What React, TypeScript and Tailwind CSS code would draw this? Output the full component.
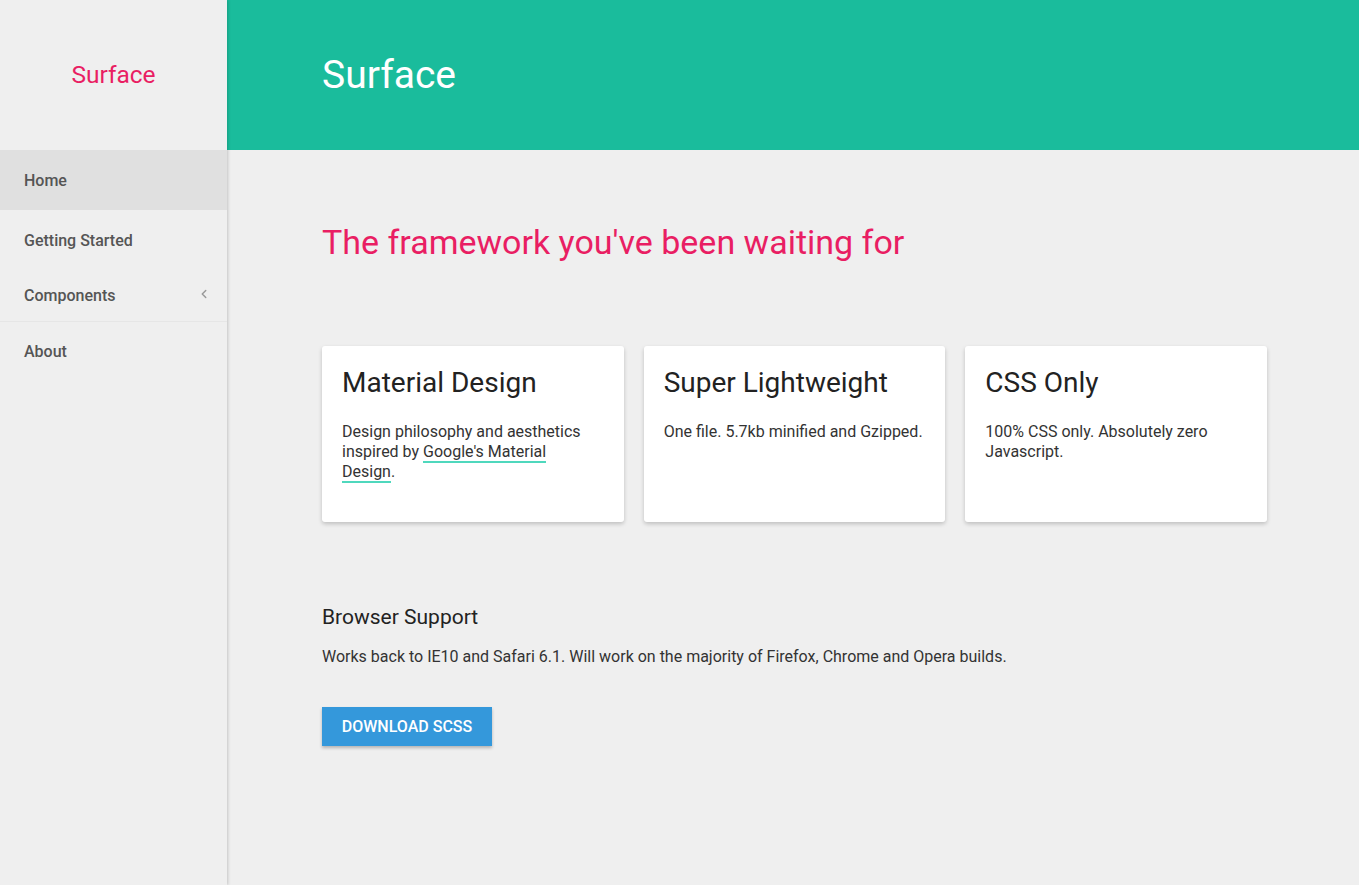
import React from 'react';
import { ChevronLeft } from 'lucide-react';

const navItems = [
  { label: 'Home', active: true, h: 'h-[60px]' },
  { label: 'Getting Started', h: 'h-[60px]' },
  { label: 'Components', chevron: true, h: 'h-[52px] border-b border-[#e6e6e6]' },
  { label: 'About', h: 'h-[58px]' },
];

const cards = [
  {
    title: 'Material Design',
    bodyClass: 'max-w-[250px]',
    body: (
      <>
        Design philosophy and aesthetics inspired by{' '}
        <a className="border-b-2 border-[#4fd8bd] text-[#333]">Google's Material Design</a>.
      </>
    ),
  },
  { title: 'Super Lightweight', bodyClass: '', body: 'One file. 5.7kb minified and Gzipped.' },
  { title: 'CSS Only', bodyClass: '', body: '100% CSS only. Absolutely zero Javascript.' },
];

export default function App() {
  return (
    <div className="flex min-h-[885px] bg-[#efefef] font-['Roboto',sans-serif]">
      <aside className="relative z-10 w-[227px] shrink-0 bg-[#efefef] shadow-[1px_0_3px_rgba(0,0,0,0.18)]">
        <div className="flex h-[150px] items-center justify-center pt-px text-[24.5px] text-[#e91e63]">Surface</div>
        <nav>
          {navItems.map((item) => (
            <div
              key={item.label}
              className={`flex items-center justify-between pl-6 pr-4 pt-px text-[16px] font-medium text-[#555] ${item.h} ${item.active ? 'bg-[#e0e0e0]' : ''}`}
            >
              <span>{item.label}</span>
              {item.chevron && <ChevronLeft size={14} strokeWidth={2.5} className="mb-1 text-[#999]" />}
            </div>
          ))}
        </nav>
      </aside>

      <main className="flex-1">
        <header className="flex h-[150px] items-center bg-[#1abc9c] pl-[95px] pt-px text-[39px] text-white">Surface</header>

        <div className="w-[1040px] pl-[95px]">
          <h1 className="mt-[72px] text-[34px] leading-[40px] text-[#e91e63]">The framework you've been waiting for</h1>

          <div className="mt-[84px] grid grid-cols-3 gap-5">
            {cards.map((c) => (
              <div key={c.title} className="h-[176px] rounded-[3px] bg-white px-5 pt-[19px] shadow-[0_2px_4px_rgba(0,0,0,0.2)]">
                <h2 className="text-[28px] leading-[36px] text-[#222]">{c.title}</h2>
                <p className={`mt-[21px] text-[16px] leading-[20px] text-[#333] ${c.bodyClass}`}>{c.body}</p>
              </div>
            ))}
          </div>

          <h3 className="mt-[82px] text-[21px] leading-[26px] text-[#222]">Browser Support</h3>
          <p className="mt-[17px] text-[16px] leading-[20px] text-[#333]">
            Works back to IE10 and Safari 6.1. Will work on the majority of Firefox, Chrome and Opera builds.
          </p>

          <button className="mt-[40px] h-[39px] w-[170px] bg-[#3498db] text-[16px] font-medium text-white shadow-[0_2px_3px_rgba(0,0,0,0.25)]">
            DOWNLOAD SCSS
          </button>
        </div>
      </main>
    </div>
  );
}
